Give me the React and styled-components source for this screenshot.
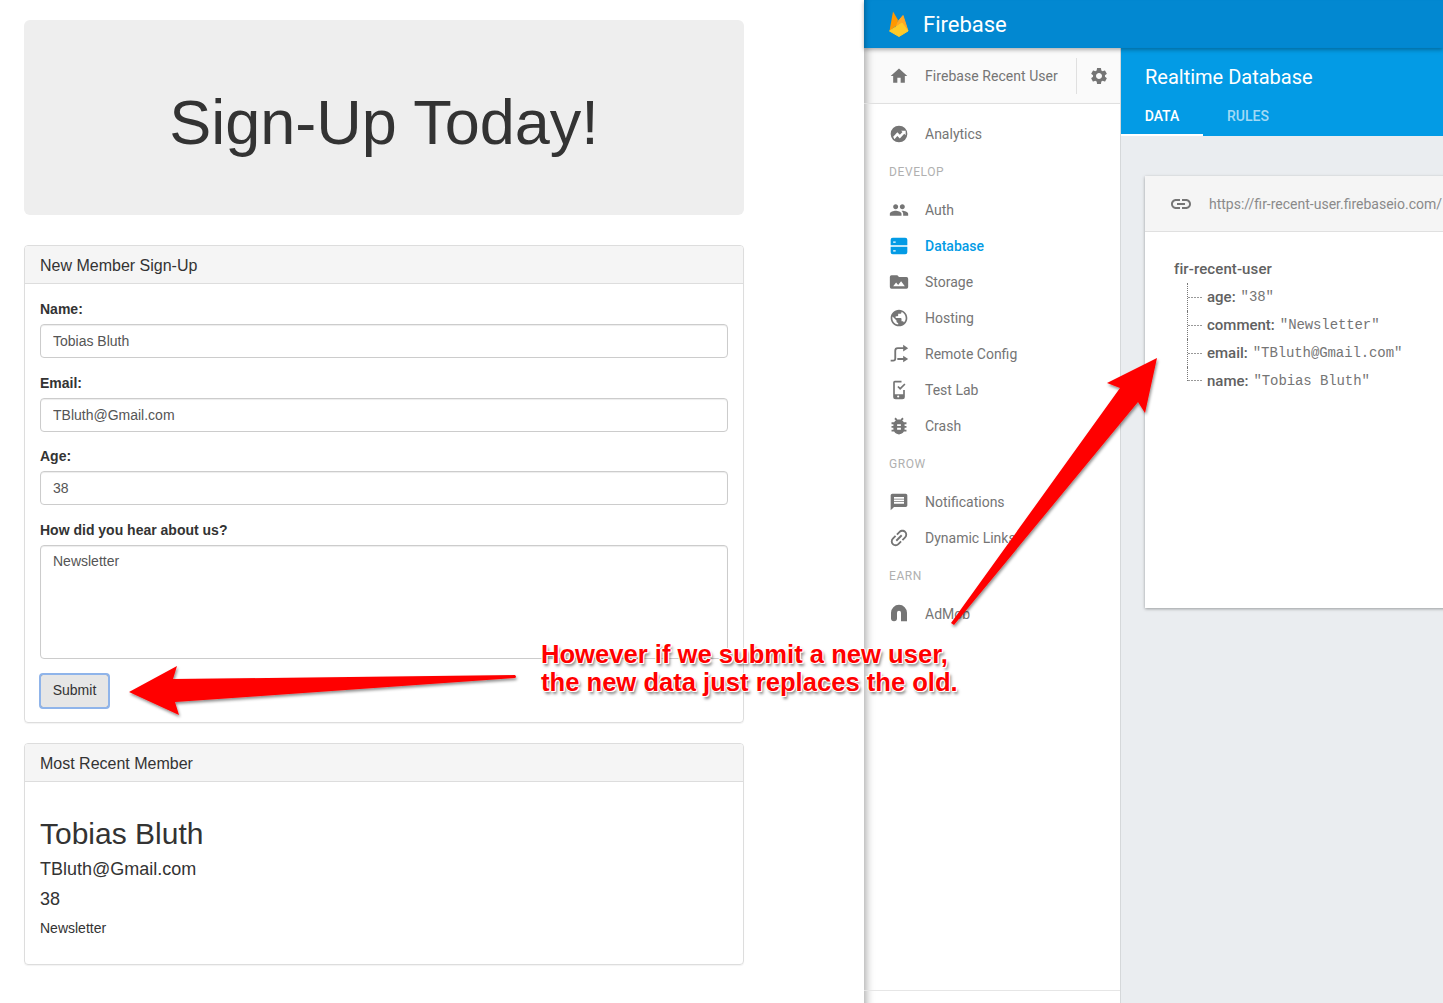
import React from 'react';
import styled, { createGlobalStyle } from 'styled-components';
import { MdHome, MdSettings, MdPeople, MdPublic, MdBugReport, MdMessage, MdLink } from 'react-icons/md';

const GlobalStyle = createGlobalStyle`
  html, body { margin: 0; padding: 0; background: #fff; }
  body { font-family: "Liberation Sans", Arial, sans-serif; color: #333; }
  * { box-sizing: border-box; }
`;

const Page = styled.div`
  position: relative;
  width: 1443px;
  height: 1003px;
  overflow: hidden;
  display: flex;
`;

// bootstrap side
const SignUp = styled.div`
  width: 864px;
  flex: none;
  padding: 20px 120px 0 24px;
`;

const Jumbotron = styled.div`
  height: 195px;
  background: #eee;
  border-radius: 6px;
  display: flex;
  align-items: center;
  justify-content: center;
  font-size: 63px;
  color: #333;
  margin-bottom: 30px;
  padding-top: 8px;
`;

const Panel = styled.div`
  border: 1px solid #ddd;
  border-radius: 4px;
  margin-bottom: 20px;
  height: ${p => p.$h}px;
  box-shadow: 0 1px 1px rgba(0, 0, 0, 0.05);
`;

const PanelHeading = styled.div`
  height: 38px;
  padding: 2px 15px 0;
  display: flex;
  align-items: center;
  background: #f5f5f5;
  border-bottom: 1px solid #ddd;
  font-size: 16px;
  border-radius: 3px 3px 0 0;
`;

const PanelBody = styled.div`
  padding: 15px;
`;

const Field = styled.div`
  margin-bottom: 14.67px;
`;

const Label = styled.label`
  display: block;
  font-size: 14px;
  font-weight: bold;
  line-height: 20px;
  margin-bottom: 5px;
`;

const Input = styled.input`
  display: block;
  width: 100%;
  height: 34px;
  padding: 6px 12px;
  font: 14px "Liberation Sans", Arial, sans-serif;
  color: #555;
  border: 1px solid #ccc;
  border-radius: 4px;
  box-shadow: inset 0 1px 1px rgba(0, 0, 0, 0.075);
`;

const TextArea = styled.textarea`
  display: block;
  width: 100%;
  height: 114px;
  padding: 5px 12px;
  font: 14px/20px "Liberation Sans", Arial, sans-serif;
  color: #555;
  border: 1px solid #ccc;
  border-radius: 4px;
  resize: none;
  box-shadow: inset 0 1px 1px rgba(0, 0, 0, 0.075);
`;

const SubmitButton = styled.button`
  display: block;
  width: 69px;
  height: 34px;
  padding: 0 0 2px;
  font: 14px "Liberation Sans", Arial, sans-serif;
  color: #333;
  background: #e6e6e6;
  border: 1px solid #8c8c8c;
  border-radius: 3px;
  outline: 2px solid #8fb4ea;
  outline-offset: -1px;
`;

const MemberName = styled.div`
  font-size: 30px;
  line-height: 33px;
  margin-top: 20px;
  margin-bottom: 9px;
`;

const MemberLine = styled.div`
  font-size: 18px;
  line-height: 20px;
  margin-bottom: 9.5px;
`;

const MemberNote = styled.div`
  font-size: 14px;
  line-height: 20px;
`;

// firebase console side
const Console = styled.div`
  flex: 1;
  display: flex;
  flex-direction: column;
  min-width: 0;
  font-family: Roboto, "Liberation Sans", sans-serif;
`;

const TopBar = styled.div`
  height: 48px;
  flex: none;
  background: #0288d1;
  display: flex;
  align-items: center;
  padding-left: 25px;
  gap: 14px;
  color: #fff;
  font-size: 22px;
  box-shadow: inset 6px 0 6px -6px rgba(0, 0, 0, 0.4), 0 2px 4px rgba(0, 0, 0, 0.3);
  position: relative;
  z-index: 2;
`;

const ConsoleBody = styled.div`
  flex: 1;
  display: flex;
  min-height: 0;
`;

const Sidebar = styled.div`
  width: 257px;
  flex: none;
  display: flex;
  flex-direction: column;
  background: #fff;
  border-right: 1px solid #d5d8da;
  padding-bottom: 12px;
  box-shadow: inset 11px 0 9px -9px rgba(0, 0, 0, 0.35);
`;

const ProjectRow = styled.div`
  height: 56px;
  flex: none;
  display: flex;
  align-items: center;
  padding-left: 25px;
  background: #fafafa;
  border-bottom: 1px solid #e0e0e0;
  font-size: 14px;
  color: #757575;
  margin-bottom: 12px;
  box-shadow: inset 11px 0 9px -9px rgba(0, 0, 0, 0.35);
`;

const ProjectName = styled.span`
  margin-left: 16px;
  width: 151px;
  padding-top: 1px;
  letter-spacing: 0.05px;
  white-space: nowrap;
`;

const SettingsCell = styled.div`
  height: 36px;
  flex: 1;
  border-left: 1px solid #e0e0e0;
  display: flex;
  align-items: center;
  padding-left: 12px;
`;

const NavItem = styled.div`
  height: 36px;
  flex: none;
  display: flex;
  align-items: center;
  gap: 16px;
  padding-left: 25px;
  font-size: 14px;
  font-weight: ${p => (p.$active ? 500 : 400)};
  color: ${p => (p.$active ? '#039be5' : '#757575')};
  white-space: nowrap;
`;

const NavSection = styled.div`
  height: 40px;
  flex: none;
  display: flex;
  align-items: center;
  padding-left: 25px;
  font-size: 12px;
  letter-spacing: 0.6px;
  color: #b0b0b0;
`;

const SidebarFoot = styled.div`
  margin-top: auto;
  border-top: 1px solid #e6e6e6;
  height: 1px;
`;

const Main = styled.div`
  flex: 1;
  min-width: 0;
  display: flex;
  flex-direction: column;
  background: #eaedf0;
`;

const MainHeader = styled.div`
  height: 88px;
  flex: none;
  background: #039be5;
  color: #fff;
  display: flex;
  flex-direction: column;
  justify-content: space-between;
  padding-top: 16px;
`;

const MainTitle = styled.div`
  font-size: 20px;
  font-weight: 400;
  line-height: 26px;
  padding-left: 24px;
`;

const Tabs = styled.div`
  display: flex;
`;

const Tab = styled.div`
  width: ${p => p.$w}px;
  height: 38px;
  display: flex;
  align-items: center;
  justify-content: center;
  font-size: 14px;
  font-weight: 500;
  color: ${p => (p.$active ? '#fff' : 'rgba(255,255,255,0.65)')};
  border-bottom: 2px solid ${p => (p.$active ? '#fff' : 'transparent')};
`;

const DataCard = styled.div`
  margin: 40px 0 0 24px;
  height: 432px;
  width: 340px;
  background: #fff;
  box-shadow: 0 1px 3px rgba(0, 0, 0, 0.35);
`;

const UrlBar = styled.div`
  height: 56px;
  display: flex;
  align-items: center;
  padding-left: 24px;
  gap: 16px;
  background: #f5f5f5;
  border-bottom: 1px solid #e0e0e0;
  font-size: 14px;
  color: #8a8a8a;
  white-space: nowrap;
  overflow: hidden;
`;

const LinkIcon = styled(MdLink)`
  color: #757575;
  flex: none;
`;

const TreeWrap = styled.div`
  padding: 23px 0 0 29px;
`;

const TreeRoot = styled.div`
  font-size: 15px;
  font-weight: 500;
  letter-spacing: 0.1px;
  color: #616161;
  line-height: 28px;
`;

const TreeRows = styled.div`
  margin-left: 13px;
`;

const TreeRow = styled.div`
  height: 28px;
  display: flex;
  align-items: center;
  font-size: 15px;
  color: #616161;
  white-space: nowrap;
`;

const Stem = styled.span`
  width: 20px;
  align-self: flex-start;
  height: ${p => (p.$last ? '50%' : '100%')};
  border-left: 1px dotted #777;
  background: ${p => (p.$last
    ? 'repeating-linear-gradient(90deg, #999 0 2px, transparent 2px 3px) left bottom / 15px 1px no-repeat'
    : 'repeating-linear-gradient(90deg, #999 0 2px, transparent 2px 3px) left center / 15px 1px no-repeat')};
`;

const TreeKey = styled.b`
  font-weight: 500;
  margin-right: 5px;
`;

const TreeValue = styled.span`
  font-family: "Liberation Mono", "DejaVu Sans Mono", monospace;
  font-size: 14px;
  letter-spacing: -0.1px;
  color: #757575;
`;

// red annotations laid over the screenshot
const Overlay = styled.svg`
  position: absolute;
  left: 0;
  top: 0;
  pointer-events: none;
  z-index: 5;
`;

const Note = styled.div`
  position: absolute;
  left: 541px;
  top: 640px;
  z-index: 6;
  font: bold 25.6px/28px "Liberation Sans", Arial, sans-serif;
  color: #f00;
  white-space: nowrap;
  text-shadow: -1px 0 0 #fff, 1px 0 0 #fff, 0 -1px 0 #fff, 0 1px 0 #fff, 1px 1px 0 #fff, -1px -1px 0 #fff, 2px 3px 3px rgba(0, 0, 0, 0.5);
`;

const FirebaseLogo = () => (
  <svg width="20" height="26" viewBox="0 0 20 26">
    <path d="M6 14 L14 4.500 L19 20 Z" fill="#ffa726" stroke="#ffa726" strokeLinejoin="round" />
    <path d="M0.500 20 L4 0.500 L9 9 L7 15 Z" fill="#ff9800" />
    <path d="M0.500 20 L13 12 L19 20 L10 25.500 Z" fill="#ffca28" stroke="#ffca28" strokeLinejoin="round" />
  </svg>
);

const icon = { width: 20, height: 20, viewBox: '0 0 24 24', fill: 'currentColor' };

const AnalyticsIcon = () => (
  <svg {...icon}>
    <path fillRule="evenodd" d="M12 2a10 10 0 1 0 0 20 10 10 0 0 0 0-20zm-7 13.200 5-5.200 3 3 3.200-3.400L14.500 8H20v5.500l-1.700-1.700L13 17.500l-3-3-3.500 3.700z" />
  </svg>
);
const DatabaseIcon = () => (
  <svg {...icon}>
    <path fillRule="evenodd" d="M4.500 2h15A2.500 2.500 0 0 1 22 4.500V11H2V4.500A2.500 2.500 0 0 1 4.500 2zM5 6.500V8h3V6.500zM2 13h20v6.500a2.500 2.500 0 0 1-2.500 2.500h-15A2.500 2.500 0 0 1 2 19.500zm3 4v1.500h3V17z" />
  </svg>
);
const StorageIcon = () => (
  <svg {...icon}>
    <path fillRule="evenodd" d="M3 4h7l2 2h9a2 2 0 0 1 2 2v10a2 2 0 0 1-2 2H3a2 2 0 0 1-2-2V6a2 2 0 0 1 2-2zm2 13h14l-4.500-6-3.500 4.500-2.500-3z" />
  </svg>
);
const RemoteIcon = () => (
  <svg {...icon} fill="none" stroke="currentColor" strokeWidth="2.200">
    <path d="M2 20h3c1.500 0 2.500-1 2.500-2.500V8c0-2 1-3 3-3H18M10 18h9" />
    <path d="M17 1l6 4-6 4zM17 14l6 4-6 4z" fill="currentColor" stroke="none" />
  </svg>
);
const TestLabIcon = () => (
  <svg {...icon}>
    <path d="M7 1h8v2H7v14h10v-5h2v8a3 3 0 0 1-3 3H8a3 3 0 0 1-3-3V3a2 2 0 0 1 2-2zm4 17.500a1.300 1.300 0 1 0 0 2.600 1.300 1.300 0 0 0 0-2.600z" />
    <path d="M10 8.500l1.400-1.400 2 2 5-5L19.800 5.500l-6.400 6.500z" />
  </svg>
);
const AdMobIcon = () => (
  <svg {...icon}>
    <path d="M6 17V10.600a6 6 0 0 1 12 0V20.800" fill="none" stroke="currentColor" strokeWidth="7.200" />
    <circle cx="6" cy="17" r="3.600" />
  </svg>
);

const LinkAngled = styled(MdLink)`
  transform: rotate(-45deg) scale(1.15);
`;

const BugIcon = styled(MdBugReport)`
  transform: scale(1.12);
`;

const SIDEBAR = [
  { label: 'Analytics', Icon: AnalyticsIcon },
  { section: 'DEVELOP' },
  { label: 'Auth', Icon: MdPeople },
  { label: 'Database', Icon: DatabaseIcon, active: true },
  { label: 'Storage', Icon: StorageIcon },
  { label: 'Hosting', Icon: MdPublic },
  { label: 'Remote Config', Icon: RemoteIcon },
  { label: 'Test Lab', Icon: TestLabIcon },
  { label: 'Crash', Icon: BugIcon },
  { section: 'GROW' },
  { label: 'Notifications', Icon: MdMessage },
  { label: 'Dynamic Links', Icon: LinkAngled },
  { section: 'EARN' },
  { label: 'AdMob', Icon: AdMobIcon },
];

const RECORD = [
  { k: 'age', v: '"38"' },
  { k: 'comment', v: '"Newsletter"' },
  { k: 'email', v: '"TBluth@Gmail.com"' },
  { k: 'name', v: '"Tobias Bluth"' },
];

export default function App() {
  return (
    <Page>
      <GlobalStyle />
      <SignUp>
        <Jumbotron>Sign-Up Today!</Jumbotron>
        <Panel $h={478}>
          <PanelHeading>New Member Sign-Up</PanelHeading>
          <PanelBody>
            <Field>
              <Label>Name:</Label>
              <Input defaultValue="Tobias Bluth" />
            </Field>
            <Field>
              <Label>Email:</Label>
              <Input defaultValue="TBluth@Gmail.com" />
            </Field>
            <Field>
              <Label>Age:</Label>
              <Input defaultValue="38" />
            </Field>
            <Field>
              <Label>How did you hear about us?</Label>
              <TextArea defaultValue="Newsletter" />
            </Field>
            <SubmitButton>Submit</SubmitButton>
          </PanelBody>
        </Panel>
        <Panel $h={222}>
          <PanelHeading>Most Recent Member</PanelHeading>
          <PanelBody>
            <MemberName>Tobias Bluth</MemberName>
            <MemberLine>TBluth@Gmail.com</MemberLine>
            <MemberLine>38</MemberLine>
            <MemberNote>Newsletter</MemberNote>
          </PanelBody>
        </Panel>
      </SignUp>

      <Console>
        <TopBar>
          <FirebaseLogo />
          Firebase
        </TopBar>
        <ConsoleBody>
          <Sidebar>
            <ProjectRow>
              <MdHome size={20} />
              <ProjectName>Firebase Recent User</ProjectName>
              <SettingsCell><MdSettings size={20} /></SettingsCell>
            </ProjectRow>
            {SIDEBAR.map((item, index) => item.section
              ? <NavSection key={index}>{item.section}</NavSection>
              : (
                <NavItem key={index} $active={item.active}>
                  <item.Icon size={20} />
                  {item.label}
                </NavItem>
              ))}
            <SidebarFoot />
          </Sidebar>
          <Main>
            <MainHeader>
              <MainTitle>Realtime Database</MainTitle>
              <Tabs>
                <Tab $w={82} $active>DATA</Tab>
                <Tab $w={90}>RULES</Tab>
              </Tabs>
            </MainHeader>
            <DataCard>
              <UrlBar>
                <LinkIcon size={24} />
                https://fir-recent-user.firebaseio.com/
              </UrlBar>
              <TreeWrap>
                <TreeRoot>fir-recent-user</TreeRoot>
                <TreeRows>
                  {RECORD.map((row, index) => (
                    <TreeRow key={row.k}>
                      <Stem $last={index === RECORD.length - 1} />
                      <TreeKey>{row.k}:</TreeKey>
                      <TreeValue>{row.v}</TreeValue>
                    </TreeRow>
                  ))}
                </TreeRows>
              </TreeWrap>
            </DataCard>
          </Main>
        </ConsoleBody>
      </Console>

      <Overlay width="1443" height="1003" viewBox="0 0 1443 1003">
        <defs>
          <filter id="arrowShadow" x="-10%" y="-10%" width="120%" height="120%">
            <feDropShadow dx="1" dy="2" stdDeviation="1.500" floodColor="#000" floodOpacity="0.45" />
          </filter>
        </defs>
        <path filter="url(#arrowShadow)" fill="#f00" d="M129 692 L177 666 L173 679 L515 675 Q517 677 515 678 L175 702 L179 715 Z" />
        <path filter="url(#arrowShadow)" fill="#f00" d="M1157 358 L1107 383 L1120 388 L951 623 L954 625 L1138 402 L1145 413 Z" />
      </Overlay>
      <Note>
        However if we submit a new user,<br />
        the new data just replaces the old.
      </Note>
    </Page>
  );
}
